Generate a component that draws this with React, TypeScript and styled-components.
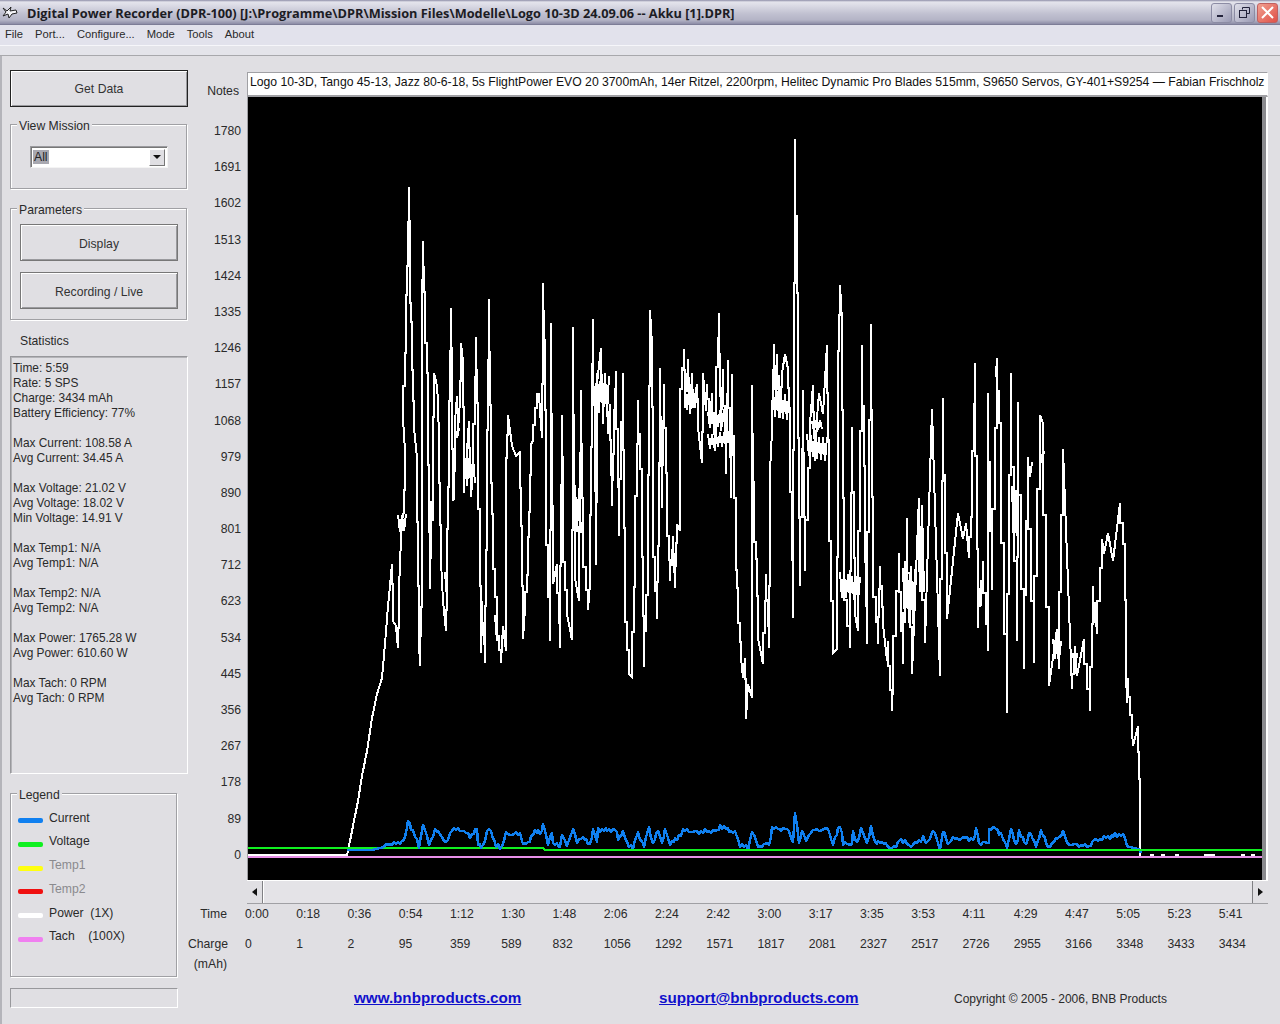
import React from "react";
import styled, { createGlobalStyle } from "styled-components";

const Global = createGlobalStyle`
  html, body { margin: 0; padding: 0; background: #e0dfe3; }
  body { width: 1280px; height: 1024px; overflow: hidden; font-family: "Liberation Sans", sans-serif; }
`;

const UI = `"Liberation Sans", "Noto Sans", sans-serif`;

const Window = styled.div`
  width: 1280px; height: 1024px; display: flex; flex-direction: column; overflow: hidden;
  background: #e0dfe3; color: #2a2a2a; font: 12.2px/15px ${UI};
`;
const TitleBar = styled.header`
  height: 25px; box-sizing: border-box; display: flex; align-items: center; padding: 0 2px 0 2px;
  background: linear-gradient(#8e8ea8 0, #e4e4ec 2px, #dcdce6 5px, #c0c0d0 14px, #b4b4c6 20px, #8c8ca6 24px, #6e6e88 25px);
`;
const TitleText = styled.h1`
  margin: 0 0 0 9px; flex: 1; font: bold 12.75px/24px "Open Sans", "Liberation Sans", sans-serif; color: #1c1c24; white-space: nowrap;
`;
const WinButton = styled.button<{ $close?: boolean }>`
  width: 21px; height: 20px; padding: 0; margin-left: 2px; display: flex; align-items: center; justify-content: center;
  border: 1px solid ${p => (p.$close ? "#c06060" : "#8c8ca4")}; border-radius: 3px;
  background: ${p => (p.$close ? "linear-gradient(135deg,#f0a090,#e05048)" : "linear-gradient(135deg,#e0e0ea,#9a9ab4)")};
`;
const MenuBar = styled.nav`
  box-sizing: border-box; height: 21px; display: flex; padding: 0 0 1px 5px; gap: 12px; align-items: center; background: #e2e2ec;
  font-size: 11.2px; border-bottom: 1px solid #f6f6fa;
`;
const MenuItem = styled.span``;
const Strip = styled.div`height: 9px; background: #e4e4ea; border-bottom: 1px solid #a8a8ac;`;
const Body = styled.main`
  flex: 1; display: flex; border-left: 2px solid #b4b4ba; min-height: 0;
`;
const Side = styled.aside`
  flex: none; width: 178px; margin-left: 8px; padding-top: 14px; display: flex; flex-direction: column;
`;
const RaisedButton = styled.button<{ $strong?: boolean; $w?: number }>`
  display: block; box-sizing: border-box; width: ${p => p.$w ?? 178}px; height: 37px; padding: ${p => (p.$strong ? "0" : "3px 0 0")};
  font: 12.2px ${UI}; color: #333; background: #e0dfe3;
  border: 1px solid ${p => (p.$strong ? "#222" : "#777")};
  box-shadow: inset 1px 1px 0 #fff, inset -1px -1px 0 #9a9a9e;
`;
const Group = styled.fieldset<{ $h: number; $w?: number; $mt: number }>`
  box-sizing: border-box; width: ${p => p.$w ?? 177}px; height: ${p => p.$h}px; margin: ${p => p.$mt}px 0 0; padding: 0;
  border: 1px solid #a0a0a4; box-shadow: 1px 1px 0 #fff, inset 1px 1px 0 #fff; position: relative;
`;
const GroupLabel = styled.span`
  position: absolute; left: 6px; top: -6px; padding: 0 2px; background: #e0dfe3; line-height: 14px;
`;
const ComboBox = styled.div`
  box-sizing: border-box; margin: 21px 0 0 19px; width: 138px; height: 22px; display: flex; align-items: center; padding: 2px;
  background: #fff; border: 1px solid #9a9a9e; border-bottom-color: #f4f4f4; border-right-color: #f4f4f4; box-shadow: inset 1px 1px 0 #777;
`;
const ComboValue = styled.span`flex: 1; line-height: 15px;`;
const Selected = styled.span`background: #a8a8b0; color: #222; padding: 0 1px;`;
const ComboArrow = styled.span`
  width: 16px; height: 17px; box-sizing: border-box; display: flex; align-items: center; justify-content: center; background: #e0dfe3;
  border: 1px solid #fff; border-right-color: #777; border-bottom-color: #777;
  &::after { content: ""; border: 4px solid transparent; border-top: 4px solid #111; border-bottom: 0; }
`;
const ButtonStack = styled.div`display: flex; flex-direction: column; gap: 11px; margin: 15px 0 0 9px;`;
const StatsLabel = styled.div`margin: 13px 0 0 10px; height: 16px; line-height: 16px;`;
const StatsBox = styled.pre`
  box-sizing: border-box; margin: 7px 0 0; width: 178px; height: 418px; padding: 4px 0 0 2px; font: 11.9px/15px ${UI}; color: #2a2a2a;
  border: 1px solid #98989c; border-right-color: #fff; border-bottom-color: #fff; box-shadow: inset 1px 1px 0 #b4b4b8;
`;
const LegendList = styled.div`display: flex; flex-direction: column; margin: 17px 0 0 8px; gap: 9.8px;`;
const LegendRow = styled.div<{ $muted?: boolean }>`
  display: flex; align-items: center; height: 14px; color: ${p => (p.$muted ? "#8a8a8e" : "#2a2a2a")}; white-space: pre;
`;
const Swatch = styled.i<{ $c: string }>`
  display: block; width: 25px; height: 5px; margin: 5px 6px 0 -1px; border-radius: 2px; background: ${p => p.$c};
`;
const StatusBox = styled.div`
  box-sizing: border-box; width: 168px; height: 20px; margin-top: 11px;
  border: 1px solid #98989c; border-right-color: #fff; border-bottom-color: #fff;
`;
const Work = styled.section`flex: 1; display: flex; flex-direction: column; padding-top: 16px; min-width: 0;`;
const Upper = styled.div`display: flex;`;
const YAxis = styled.div`flex: none; width: 53px; display: flex; flex-direction: column; align-items: flex-end; padding-right: 6px;`;
const NotesLabel = styled.div`margin-top: 12px; padding-right: 2px; height: 15px; line-height: 15px;`;
const YTicks = styled.div`
  margin-top: 25px; height: 739px; display: flex; flex-direction: column; justify-content: space-between; align-items: flex-end;
`;
const YTick = styled.span`line-height: 15px;`;
const PlotColumn = styled.div`flex: none; width: 1021px; display: flex; flex-direction: column;`;
const Notes = styled.div`
  flex: none; box-sizing: border-box; height: 25px; padding: 1px 0 0 2px; background: #fff; line-height: 17px; white-space: nowrap; overflow: hidden;
  border: 1px solid #a0a0a4; border-right-color: #fff; border-bottom: 2px solid #a0a0a4; color: #111;
`;
const Plot = styled.div`
  flex: none; height: 783px; display: flex; background: #000; border-left: 1px solid #a0a0a4; border-right: 2px solid #fff; box-sizing: border-box;
`;
const PlotSvg = styled.svg`display: block; flex: none; width: 1014px; height: 783px; background: #000;`;
const PlotEdge = styled.div`flex: 1; background: #8a8a8e;`;
const ScrollBar = styled.div`
  flex: none; width: 1021px; height: 24px; display: flex; background: #e4e3e7; border-bottom: 1px solid #a0a0a4; border-top: 1px solid #fff; box-sizing: border-box;
`;
const ScrollBtn = styled.div<{ $dir: "l" | "r" }>`
  width: 15px; display: flex; align-items: center; justify-content: center; background: #e0dfe3;
  border-${p => (p.$dir === "l" ? "right" : "left")}: 1px solid #808084;
  &::after {
    content: ""; border: 4px solid transparent; border-${p => (p.$dir === "l" ? "left" : "right")}: 0;
    border-${p => (p.$dir === "l" ? "right" : "left")}: 5px solid #111;
  }
`;
const ScrollTrack = styled.div`flex: 1; background: #e4e3e7; border-left: 1px solid #fff;`;
const Scale = styled.div`
  display: grid; grid-template-columns: 57px repeat(20, 51.25px); grid-template-rows: 30px 20px 20px;
`;
const ScaleHead = styled.span`text-align: right; padding-right: 18px; line-height: 20px; white-space: nowrap;`;
const ScaleCell = styled.span`line-height: 20px;`;
const Footer = styled.footer`display: flex; align-items: baseline; margin-top: 14px;`;
const Link = styled.a<{ $w: number; $ml: number }>`
  margin-left: ${p => p.$ml}px; width: ${p => p.$w}px; font: bold 15.2px/20px "Liberation Sans", sans-serif; color: #1010cc; text-decoration: underline; white-space: nowrap;
`;
const Copyright = styled.span`margin-left: 94px; font-size: 12px; line-height: 16px; white-space: nowrap;`;

const white: number[] = [
247,854,347,854,350,840,353,825,358,800,362,775,367,750,372,717,377,693,382,677,385,643,388,605,390,585,392,563,393,620,396,625,398,647,399,590,400,560,402,520,404,510,405,450,403,418,406,323,408,240,409,186,410,283,412,337,414,427,417,457,419,640,420,665,422,580,422,300,423,240,425,313,428,397,430,588,431,500,433,520,433,440,434,372,437,385,438,400,439,440,441,560,443,600,446,630,447,570,449,450,451,307,452,420,453,500,454,497,455,420,457,395,458,430,460,400,461,342,463,360,464,492,467,450,469,420,471,496,473,470,476,336,478,430,481,652,482,600,485,662,487,500,489,298,491,450,493,540,497,620,501,662,503,625,506,650,506,480,508,414,512,445,516,455,519,452,520,450,522,557,523,638,525,607,528,560,530,490,531,443,533,440,537,393,539,393,540,410,542,437,543,282,545,363,546,493,550,640,551,322,553,583,557,563,560,647,562,414,563,533,567,613,572,639,573,326,575,577,579,600,581,389,583,543,588,609,590,583,592,387,593,318,596,564,597,383,601,347,603,423,605,372,608,433,610,403,612,505,614,430,616,370,619,535,623,372,625,593,629,673,632,676,635,547,638,399,642,497,644,666,648,563,650,309,652,343,653,523,657,618,659,513,660,367,662,507,664,383,667,510,670,580,673,535,675,587,677,523,680,530,680,410,684,348,685,407,688,358,690,413,692,372,693,407,697,383,698,427,702,462,703,372,706,410,707,383,710,427,712,392,715,450,716,395,719,312,721,430,723,368,726,473,728,359,731,497,732,373,736,550,738,603,741,657,743,677,745,657,746,718,748,683,752,697,752,384,754,523,757,573,758,637,763,663,766,573,769,647,770,470,772,430,774,343,776,407,777,353,780,417,782,372,785,353,788,368,790,423,793,617,795,138,798,358,800,585,803,389,805,570,810,423,813,384,815,460,817,417,819,392,823,413,825,379,827,344,829,480,833,652,837,648,838,385,840,284,842,320,844,573,850,647,852,426,855,613,858,630,862,344,865,517,867,643,871,323,873,570,878,643,880,565,883,623,887,660,888,640,892,710,893,680,899,552,903,663,907,517,912,673,919,497,925,642,932,408,940,675,943,397,947,618,958,512,963,538,966,522,969,557,972,498,975,362,978,627,983,560,988,650,988,392,992,589,997,357,1001,450,1007,712,1011,372,1017,640,1018,401,1024,668,1028,456,1034,662,1040,414,1043,422,1049,685,1057,628,1059,668,1063,448,1072,688,1075,645,1077,675,1084,638,1090,710,1093,585,1097,633,1102,538,1104,553,1108,532,1113,560,1120,502,1125,560,1126,670,1127,702,1128,677,1132,730,1133,745,1138,725,1140,800,1140,855,
];
// Areas where the power trace is so busy that its strokes merge: [x0, x1, y0, y1].
const busy: number[][] = [
[455,460,427,440],[465,475,450,487],[575,582,483,543],[398,407,510,533],[445,448,567,603],[495,498,607,643],[685,698,383,410],[708,727,407,430],[773,790,387,423],[812,822,417,430],[708,735,430,450],[807,828,430,460],[840,860,570,603],[903,915,563,637],[918,925,503,613],[996,999,358,420],[1012,1018,480,563],[978,983,580,613],[1028,1033,457,477],[1040,1045,447,463],[1053,1062,637,663],[1073,1078,647,673],[1094,1097,607,630],[593,610,370,423],
];

const blueA: number[] = [
347,855,377,848,392,842,398,843,405,837,408,820,413,830,419,846,423,823,429,843,435,830,440,832,446,843,452,828,462,829,470,835,477,828,478,843,483,845,489,826,496,845,502,846,506,833,520,833,523,843,528,843,533,832,542,830,543,823,548,843,552,830,553,843,560,845,562,833,567,845,573,827,577,842,581,835,590,843,593,827,597,842,598,829,615,829,618,838,623,830,627,843,633,846,638,832,644,845,649,826,653,843,658,830,662,840,665,830,670,842,677,838,683,829,697,831,717,830,720,825,735,832,740,843,748,848,
];
// second half, read from a crop whose width was scaled by 2.953
const blueB: number[] = [
5,150,25,195,55,190,65,140,115,148,127,185,133,97,145,180,155,150,165,180,180,150,230,145,245,190,265,128,275,190,300,190,305,155,315,190,328,140,345,190,358,135,370,190,385,180,415,200,430,198,440,175,475,195,510,170,520,190,540,150,560,200,570,150,585,190,595,175,640,170,665,175,668,140,675,185,705,185,705,145,720,140,740,160,760,200,770,145,785,195,795,150,815,195,825,150,845,195,860,150,880,198,925,155,940,190,1000,195,1015,180,1045,170,1095,158,1108,170,1112,195,1150,205,1155,215,
];
const blue = [...blueA, ...blueB.map((v, i) => (i % 2 === 0 ? Math.round(750 + v / 2.953) : Math.round(780 + v / 3)))];
const green = [248, 847, 543, 847, 545, 849, 1262, 849];
const pink = [248, 856, 1262, 856];
const tailDots = [1150, 1161, 1175, 1204, 1207, 1211, 1241, 1251, 1262];

const pts = (a: number[]) => {
  let s = "";
  for (let i = 0; i < a.length; i += 2) s += `${a[i]},${a[i + 1]} `;
  return s.trim();
};
// Turn a trace into the recorder's stair-stepped look: near-vertical runs with small sideways shoulders.
const stepped = (a: number[]) => {
  const out: number[] = [a[0], a[1]];
  for (let i = 2; i < a.length; i += 2) {
    const x0 = a[i - 2], y0 = a[i - 1], x1 = a[i], y1 = a[i + 1];
    const dy = y1 - y0;
    if (Math.abs(dy) > 40 && x1 - x0 <= 6) {
      const mid = Math.round((x0 + x1) / 2);
      const y25 = Math.round(y0 + dy * 0.35), y75 = Math.round(y0 + dy * 0.7);
      out.push(x0, y25, mid, y25, mid, y75, x1, y75, x1, y1);
    } else out.push(x1, y1);
  }
  return out;
};
// Fine sample noise along the current trace.
const jagged = (a: number[]) => {
  const out: number[] = [];
  for (let i = 2; i < a.length; i += 2) {
    const x0 = a[i - 2], y0 = a[i - 1], x1 = a[i], y1 = a[i + 1];
    const n = Math.max(1, Math.round((x1 - x0) / 2));
    for (let k = 0; k < n; k++) {
      const x = x0 + ((x1 - x0) * k) / n;
      const y = y0 + ((y1 - y0) * k) / n;
      const noise = x > 385 && x < 1125 ? Math.sin(x * 1.7) * 1.6 + Math.sin(x * 0.63) * 1 : 0;
      out.push(Math.round(x), Math.min(849, Math.round(y + noise)));
    }
  }
  out.push(a[a.length - 2], a[a.length - 1]);
  return out;
};
const scribble = ([x0, x1, y0, y1]: number[]) => {
  const out: number[] = [];
  let up = true;
  for (let x = x0; x <= x1; x += 2) {
    const wob = Math.sin(x * 2.3) * 0.2 * (y1 - y0);
    out.push(x, Math.round((up ? y0 : y1) + (up ? Math.abs(wob) : -Math.abs(wob))));
    up = !up;
  }
  return out;
};

const yTicks = [1780,1691,1602,1513,1424,1335,1246,1157,1068,979,890,801,712,623,534,445,356,267,178,89,0];
const times = ["0:00","0:18","0:36","0:54","1:12","1:30","1:48","2:06","2:24","2:42","3:00","3:17","3:35","3:53","4:11","4:29","4:47","5:05","5:23","5:41"];
const charges = [0,1,2,95,359,589,832,1056,1292,1571,1817,2081,2327,2517,2726,2955,3166,3348,3433,3434];
const legend = [
  { c: "#1080f0", t: "Current" },
  { c: "#10f020", t: "Voltage" },
  { c: "#ffff10", t: "Temp1", m: true },
  { c: "#f01010", t: "Temp2", m: true },
  { c: "#ffffff", t: "Power  (1X)" },
  { c: "#f080f0", t: "Tach    (100X)" },
];
const stats = `Time: 5:59
Rate: 5 SPS
Charge: 3434 mAh
Battery Efficiency: 77%

Max Current: 108.58 A
Avg Current: 34.45 A

Max Voltage: 21.02 V
Avg Voltage: 18.02 V
Min Voltage: 14.91 V

Max Temp1: N/A
Avg Temp1: N/A

Max Temp2: N/A
Avg Temp2: N/A

Max Power: 1765.28 W
Avg Power: 610.60 W

Max Tach: 0 RPM
Avg Tach: 0 RPM`;

const AppIcon = () => (
  <svg width="16" height="14" viewBox="0 0 16 14">
    <path d="M1 2 L5 5 L9 1 L8 5 L14 4 L15 7 L10 8 L7 12 L6 8 L1 10 L4 6 Z" fill="#f4f4f8" stroke="#222" strokeWidth="1" />
  </svg>
);

export default function App() {
  return (
    <Window>
      <Global />
      <TitleBar>
        <AppIcon />
        <TitleText>Digital Power Recorder (DPR-100) [J:\Programme\DPR\Mission Files\Modelle\Logo 10-3D 24.09.06 -- Akku [1].DPR]</TitleText>
        <WinButton aria-label="Minimize">
          <svg width="13" height="13" viewBox="0 0 13 13"><rect x="2" y="9" width="6" height="2" fill="#22223a" /></svg>
        </WinButton>
        <WinButton aria-label="Restore">
          <svg width="13" height="13" viewBox="0 0 13 13" fill="none" stroke="#22223a"><path d="M4.5 3.5V1.5H11.5V7.5H9" /><rect x="1.5" y="4.5" width="7" height="7" /></svg>
        </WinButton>
        <WinButton $close aria-label="Close">
          <svg width="13" height="13" viewBox="0 0 13 13" stroke="#fff" strokeWidth="2"><path d="M1 1L12 12M12 1L1 12" /></svg>
        </WinButton>
      </TitleBar>
      <MenuBar>
        {["File", "Port...", "Configure...", "Mode", "Tools", "About"].map(m => <MenuItem key={m}>{m}</MenuItem>)}
      </MenuBar>
      <Strip />
      <Body>
        <Side>
          <RaisedButton $strong>Get Data</RaisedButton>
          <Group $mt={17} $h={65}>
            <GroupLabel>View Mission</GroupLabel>
            <ComboBox>
              <ComboValue><Selected>All</Selected></ComboValue>
              <ComboArrow />
            </ComboBox>
          </Group>
          <Group $mt={19} $h={112}>
            <GroupLabel>Parameters</GroupLabel>
            <ButtonStack>
              <RaisedButton $w={158}>Display</RaisedButton>
              <RaisedButton $w={158}>Recording / Live</RaisedButton>
            </ButtonStack>
          </Group>
          <StatsLabel>Statistics</StatsLabel>
          <StatsBox>{stats}</StatsBox>
          <Group $mt={19} $w={167} $h={184}>
            <GroupLabel>Legend</GroupLabel>
            <LegendList>
              {legend.map(l => (
                <LegendRow key={l.t} $muted={l.m}><Swatch $c={l.c} />{l.t}</LegendRow>
              ))}
            </LegendList>
          </Group>
          <StatusBox />
        </Side>
        <Work>
          <Upper>
            <YAxis>
              <NotesLabel>Notes</NotesLabel>
              <YTicks>{yTicks.map(t => <YTick key={t}>{t}</YTick>)}</YTicks>
            </YAxis>
            <PlotColumn>
              <Notes>Logo 10-3D, Tango 45-13, Jazz 80-6-18, 5s FlightPower EVO 20 3700mAh, 14er Ritzel, 2200rpm, Helitec Dynamic Pro Blades 515mm, S9650 Servos, GY-401+S9254 — Fabian Frischholz</Notes>
              <Plot>
                <PlotSvg viewBox="248 96 1014 783" fill="none" shapeRendering="crispEdges">
                  <polyline points={pts(stepped(white))} stroke="#fff" strokeWidth="2" strokeLinejoin="miter" />
                  {busy.map(b => <polyline key={b.join()} points={pts(scribble(b))} stroke="#fff" strokeWidth="2" />)}
                  {tailDots.map(x => <path key={x} d={`M${x} 854h4`} stroke="#fff" strokeWidth="2" />)}
                  <polyline points={pts(green)} stroke="#10f020" strokeWidth="2" />
                  <polyline points={pts(jagged(blue))} stroke="#1080f0" strokeWidth="2.5" strokeLinejoin="round" />
                  <polyline points={pts(green.slice(2))} stroke="#10f020" strokeWidth="2" />
                  <polyline points={pts(pink)} stroke="#e890e8" strokeWidth="2" />
                </PlotSvg>
                <PlotEdge />
              </Plot>
              <ScrollBar>
                <ScrollBtn $dir="l" />
                <ScrollTrack />
                <ScrollBtn $dir="r" />
              </ScrollBar>
            </PlotColumn>
          </Upper>
          <Scale>
            <ScaleHead>Time</ScaleHead>
            {times.map(t => <ScaleCell key={t}>{t}</ScaleCell>)}
            <ScaleHead>Charge</ScaleHead>
            {charges.map(c => <ScaleCell key={c}>{c}</ScaleCell>)}
            <ScaleHead>(mAh)</ScaleHead>
          </Scale>
          <Footer>
            <Link $ml={166} $w={305} href="#">www.bnbproducts.com</Link>
            <Link $ml={0} $w={201} href="#">support@bnbproducts.com</Link>
            <Copyright>Copyright © 2005 - 2006, BNB Products</Copyright>
          </Footer>
        </Work>
      </Body>
    </Window>
  );
}
